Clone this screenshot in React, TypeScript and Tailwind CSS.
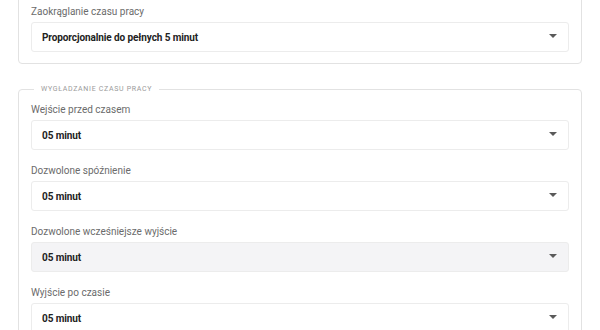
const FONT = { fontFamily: "Roboto, 'Noto Sans', sans-serif" };

interface Field {
  label: string;
  value: string;
  disabled?: boolean;
}

const SMOOTHING: Field[] = [
  { label: "Wejście przed czasem", value: "05 minut" },
  { label: "Dozwolone spóźnienie", value: "05 minut" },
  { label: "Dozwolone wcześniejsze wyjście", value: "05 minut", disabled: true },
  { label: "Wyjście po czasie", value: "05 minut" },
];

function Caret() {
  return (
    <svg width="8" height="4" viewBox="0 0 8 4" className="shrink-0 mb-[3px]">
      <path d="M0 0 L8 0 L4 4 Z" fill="#5a5a5a" />
    </svg>
  );
}

function SelectField({ label, value, disabled }: Field) {
  return (
    <div className="flex flex-col">
      <span className="text-[10px] leading-[13px] text-[#6b6b6b] mb-[4px]">{label}</span>
      <div
        className={`h-[30px] flex items-center justify-between pl-[10px] pr-[11px] border border-[#ececec] rounded-[3px] ${
          disabled ? "bg-[#f4f4f6]" : "bg-white"
        }`}
      >
        <span className="text-[10px] font-bold tracking-[-0.1px] text-[#222222]">{value}</span>
        <Caret />
      </div>
    </div>
  );
}

export default function App() {
  return (
    <div className="w-[600px] h-[330px] overflow-hidden bg-white px-[18px]" style={FONT}>
      {/* Zaokrąglanie */}
      <div className="mt-[-10px] border border-[#e2e2e2] rounded-[4px] px-[12px] pt-[14px] pb-[11px]">
        <SelectField label="Zaokrąglanie czasu pracy" value="Proporcjonalnie do pełnych 5 minut" />
      </div>

      {/* Wygładzanie */}
      <fieldset className="mt-[20px] border border-[#e2e2e2] rounded-[4px] px-[12px] pt-[9px] pb-[12px]">
        <legend className="ml-[3px] px-[7px] text-[7px] leading-[10px] tracking-[0.7px] text-[#9a9a9a] uppercase">
          Wygładzanie czasu pracy
        </legend>
        <div className="flex flex-col gap-[14px]">
          {SMOOTHING.map((f) => (
            <SelectField key={f.label} {...f} />
          ))}
        </div>
      </fieldset>
    </div>
  );
}
